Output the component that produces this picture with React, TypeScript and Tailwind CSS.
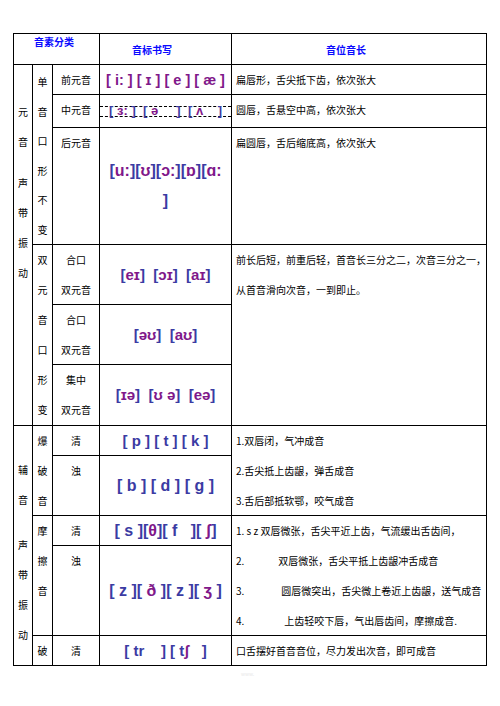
import React from 'react';

const cjk = { fontFamily: '"Noto Sans CJK SC", "Noto Sans", sans-serif' };
const ipaFont = { fontFamily: '"Liberation Sans", "DejaVu Sans", sans-serif' };

const blueLetters = '[] ptkbdgsfzr';

function Ipa({ text, allPurple, size = 'text-[15px]' }: { text: string; allPurple?: boolean; size?: string }) {
  const lines = text.split('\n');
  return (
    <div className={`${size} font-bold leading-[30px] whitespace-pre text-center`} style={ipaFont}>
      {lines.map((line, li) => (
        <div key={li}>
          {line.split('').map((c, i) => (
            <span key={i} className={allPurple || !blueLetters.includes(c) ? 'text-[#80188a]' : 'text-[#3b3ba3]'}>
              {c}
            </span>
          ))}
        </div>
      ))}
    </div>
  );
}

// a cell holding one character per 30px line, top aligned
function Stack({ chars, span }: { chars: string; span?: string }) {
  return (
    <div className={`border-r border-b border-black flex flex-col items-center ${span ?? ''}`}>
      {chars.split('').map((c, i) => (
        <div key={i} className="h-[30px] leading-[30px]">
          {c}
        </div>
      ))}
    </div>
  );
}

function Label({ lines }: { lines: string[] }) {
  return (
    <div className="border-r border-b border-black text-center">
      {lines.map((l, i) => (
        <div key={i} className="h-[30px] leading-[30px]">
          {l}
        </div>
      ))}
    </div>
  );
}

function Desc({ lines, span }: { lines: React.ReactNode[]; span?: string }) {
  return (
    <div className={`border-r border-b border-black pl-[4px] ${span ?? ''}`}>
      {lines.map((l, i) => (
        <div key={i} className="h-[30px] leading-[30px] whitespace-pre">
          {l}
        </div>
      ))}
    </div>
  );
}

function IpaCell({ children }: { children: React.ReactNode }) {
  return <div className="border-r border-b border-black flex items-center justify-center">{children}</div>;
}

export default function App() {
  return (
    <div className="w-[500px] h-[706px] bg-white text-black text-[10px]" style={cjk}>
      <div className="pt-[33px] pl-[13px]">
        <div className="w-[474px] border-l border-t border-black grid grid-cols-[19px_20px_47px_132px_255px] grid-rows-[31px_30px_33px_117px_60px_60px_61px_30px_60px_30px_90px_30px]">
          {/* header */}
          <div className="col-span-3 border-r border-b border-black pl-[20px] leading-[16px] font-bold text-[#0a0aff]">音素分类</div>
          <div className="border-r border-b border-black pl-[32px] flex items-center font-bold text-[#0a0aff]">音标书写</div>
          <div className="border-r border-b border-black pl-[94px] flex items-center font-bold text-[#0a0aff]">音位音长</div>

          {/* vowels */}
          <div className="row-span-6 border-r border-b border-black flex flex-col items-center pt-[32px]">
            {'元音声带振动'.split('').map((c, i) => (
              <div key={i} className={`h-[30px] leading-[30px] ${i === 2 ? 'mt-[11px]' : ''}`}>{c}</div>
            ))}
          </div>
          <div className="row-span-3 border-r border-b border-black flex flex-col items-center pt-[2px]">
            {'单音口形不变'.split('').map((c, i) => (
              <div key={i} className="h-[29.6px] leading-[30px]">{c}</div>
            ))}
          </div>
          <Label lines={['前元音']} />
          <IpaCell>
            <Ipa text="[ i: ] [ ɪ ] [ e ] [ æ ]" allPurple size="text-[14.5px]" />
          </IpaCell>
          <Desc lines={['扁唇形，舌尖抵下齿，依次张大']} />

          <Label lines={['中元音']} />
          <IpaCell>
            <div className="w-full h-[11px] border-y border-dashed border-black flex items-center justify-center">
              <Ipa text="[ ɜ: ]  [ ə     ]  [ ʌ    ]" size="text-[13px]" />
            </div>
          </IpaCell>
          <Desc lines={['圆唇，舌悬空中高，依次张大']} />

          <Label lines={['后元音']} />
          <IpaCell>
            <Ipa text={'[u:][ʊ][ɔ:][ɒ][ɑ:\n]'} size="text-[16px]" />
          </IpaCell>
          <Desc lines={['扁圆唇，舌后缩底高，依次张大']} />

          <Stack chars="双元音口形变" span="row-span-3" />
          <Label lines={['合口', '双元音']} />
          <IpaCell>
            <Ipa text="[eɪ]  [ɔɪ]  [aɪ]" />
          </IpaCell>
          <Desc
            span="row-span-3"
            lines={['前长后短，前重后轻，首音长三分之二，次音三分之一，', '从首音滑向次音，一到即止。']}
          />

          <Label lines={['合口', '双元音']} />
          <IpaCell>
            <Ipa text="[əʊ]  [aʊ]" />
          </IpaCell>

          <Label lines={['集中', '双元音']} />
          <IpaCell>
            <Ipa text="[ɪə]  [ʊ ə]  [eə]" />
          </IpaCell>

          {/* consonants */}
          <div className="row-span-5 border-r border-b border-black flex flex-col items-center pt-[29px]">
            {'辅音声带振动'.split('').map((c, i) => (
              <div key={i} className={`h-[30px] leading-[30px] ${i === 2 ? 'mt-[15px]' : ''}`}>{c}</div>
            ))}
          </div>
          <Stack chars="爆破音" span="row-span-2" />
          <Label lines={['清']} />
          <IpaCell>
            <Ipa text="[ p ] [ t ] [ k ]" />
          </IpaCell>
          <Desc
            span="row-span-2"
            lines={['1.双唇闭，气冲成音', '2.舌尖抵上齿龈，弹舌成音', '3.舌后部抵软鄂，咬气成音']}
          />

          <Label lines={['浊']} />
          <IpaCell>
            <Ipa text="[ b ] [ d ] [ g ]" size="text-[16px]" />
          </IpaCell>

          <Stack chars="摩擦音" span="row-span-2" />
          <Label lines={['清']} />
          <IpaCell>
            <Ipa text="[ s ][θ][ f   ][ ʃ]" size="text-[16px]" />
          </IpaCell>
          <Desc
            span="row-span-2"
            lines={[
              '1. s z 双唇微张，舌尖平近上齿，气流缓出舌齿间，',
              <>2.<span className="inline-block w-[34px]" />双唇微张，舌尖平抵上齿龈冲舌成音</>,
              <>3.<span className="inline-block w-[37px]" />圆唇微突出，舌尖微上卷近上齿龈，送气成音</>,
              <>4.<span className="inline-block w-[40px]" />上齿轻咬下唇，气出唇齿间，摩擦成音.</>,
            ]}
          />

          <Label lines={['浊']} />
          <IpaCell>
            <Ipa text="[ z ][ ð ][ z ][ ʒ ]" size="text-[16px]" />
          </IpaCell>

          <Stack chars="破" />
          <Label lines={['清']} />
          <IpaCell>
            <Ipa text="[ tr    ] [ tʃ   ]" />
          </IpaCell>
          <Desc lines={['口舌摆好首音音位，尽力发出次音，即可成音']} />
        </div>
        <div className="pl-[228px] pt-[4px] text-[5px] text-[#e8e8e8]">www.</div>
      </div>
    </div>
  );
}
